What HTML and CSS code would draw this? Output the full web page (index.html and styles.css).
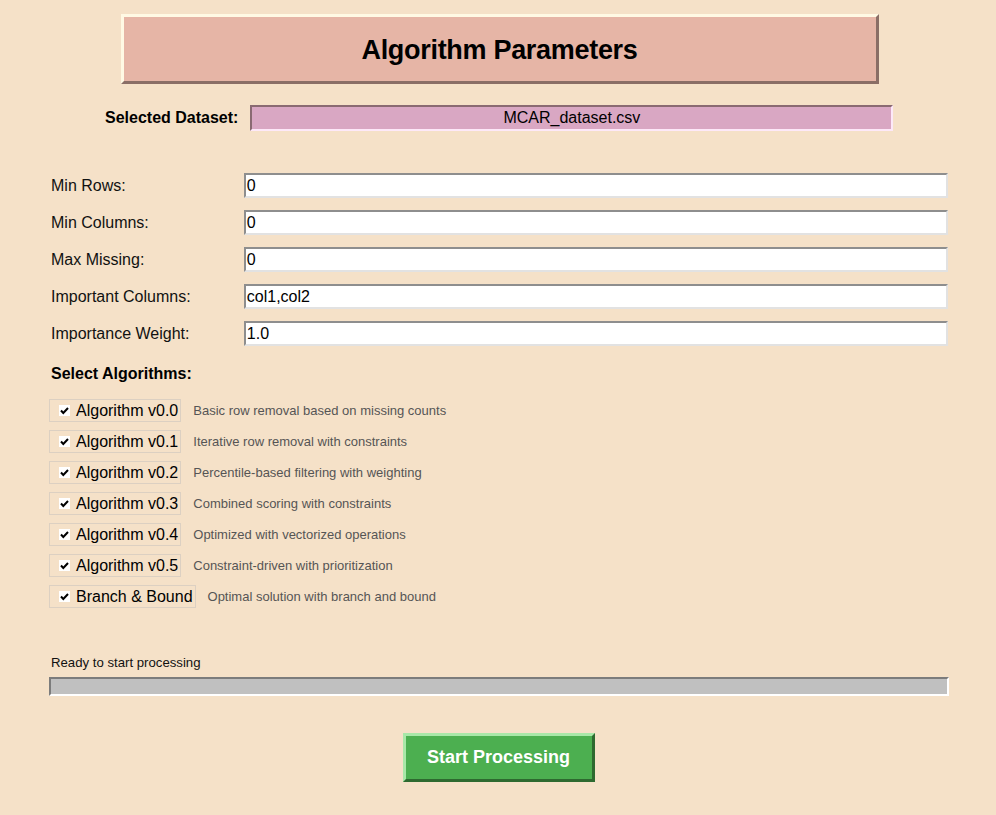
FILE: index.html
```html
<!DOCTYPE html>
<html>
<head>
<meta charset="utf-8">
<link rel="stylesheet" href="styles.css">
</head>
<body>
<div class="app">
  <div class="header"><h1>Algorithm Parameters</h1></div>

  <div class="dataset-row">
    <span class="dataset-label">Selected Dataset:</span>
    <div class="dataset-box">MCAR_dataset.csv</div>
  </div>

  <div class="form">
    <div class="form-row"><label>Min Rows:</label><div class="entry">0</div></div>
    <div class="form-row"><label>Min Columns:</label><div class="entry">0</div></div>
    <div class="form-row"><label>Max Missing:</label><div class="entry">0</div></div>
    <div class="form-row"><label>Important Columns:</label><div class="entry">col1,col2</div></div>
    <div class="form-row"><label>Importance Weight:</label><div class="entry">1.0</div></div>
  </div>

  <div class="section-title">Select Algorithms:</div>

  <div class="algos">
    <div class="algo"><div class="check"><span class="box"><svg width="11" height="11" viewBox="0 0 11 11"><path d="M2 5.5 L4.3 8 L9 3" fill="none" stroke="#000" stroke-width="2"/></svg></span>Algorithm v0.0</div><span class="desc">Basic row removal based on missing counts</span></div>
    <div class="algo"><div class="check"><span class="box"><svg width="11" height="11" viewBox="0 0 11 11"><path d="M2 5.5 L4.3 8 L9 3" fill="none" stroke="#000" stroke-width="2"/></svg></span>Algorithm v0.1</div><span class="desc">Iterative row removal with constraints</span></div>
    <div class="algo"><div class="check"><span class="box"><svg width="11" height="11" viewBox="0 0 11 11"><path d="M2 5.5 L4.3 8 L9 3" fill="none" stroke="#000" stroke-width="2"/></svg></span>Algorithm v0.2</div><span class="desc">Percentile-based filtering with weighting</span></div>
    <div class="algo"><div class="check"><span class="box"><svg width="11" height="11" viewBox="0 0 11 11"><path d="M2 5.5 L4.3 8 L9 3" fill="none" stroke="#000" stroke-width="2"/></svg></span>Algorithm v0.3</div><span class="desc">Combined scoring with constraints</span></div>
    <div class="algo"><div class="check"><span class="box"><svg width="11" height="11" viewBox="0 0 11 11"><path d="M2 5.5 L4.3 8 L9 3" fill="none" stroke="#000" stroke-width="2"/></svg></span>Algorithm v0.4</div><span class="desc">Optimized with vectorized operations</span></div>
    <div class="algo"><div class="check"><span class="box"><svg width="11" height="11" viewBox="0 0 11 11"><path d="M2 5.5 L4.3 8 L9 3" fill="none" stroke="#000" stroke-width="2"/></svg></span>Algorithm v0.5</div><span class="desc">Constraint-driven with prioritization</span></div>
    <div class="algo"><div class="check"><span class="box"><svg width="11" height="11" viewBox="0 0 11 11"><path d="M2 5.5 L4.3 8 L9 3" fill="none" stroke="#000" stroke-width="2"/></svg></span>Branch &amp; Bound</div><span class="desc">Optimal solution with branch and bound</span></div>
  </div>

  <div class="status">Ready to start processing</div>
  <div class="progress"></div>

  <div class="actions"><button class="start">Start Processing</button></div>
</div>
</body>
</html>
```

FILE: styles.css
```css
* { box-sizing: border-box; }
html, body { margin: 0; padding: 0; }
body {
  background: #f5e1c8;
  font-family: "Liberation Sans", Arial, sans-serif;
  color: #111;
  width: 996px;
  height: 815px;
  overflow: hidden;
}
.app {
  display: flex;
  flex-direction: column;
  padding: 14px 48px 0 49px;
}
.header {
  align-self: center;
  margin-left: 2px;
  width: 758px;
  height: 70px;
  padding-top: 3px;
  background: #e6b5a6;
  border: 3px solid;
  border-color: #fff9e4 #8a6e66 #8a6e66 #fff9e4;
  display: flex;
  align-items: center;
  justify-content: center;
}
.header h1 {
  margin: 0;
  font-size: 27px;
  font-weight: bold;
  color: #000;
  letter-spacing: -0.3px;
}
.dataset-row {
  display: flex;
  align-items: center;
  margin-top: 21px;
  padding-left: 56px;
  gap: 12px;
}
.dataset-label {
  font-weight: bold;
  font-size: 16px;
  color: #000;
}
.dataset-box {
  width: 643px;
  height: 26px;
  background: #d9a7c3;
  border: 2px solid;
  border-color: #8a6a72 #fde8f8 #fde8f8 #8a6a72;
  font-size: 16px;
  display: flex;
  align-items: center;
  justify-content: center;
  color: #000;
}
.form {
  display: flex;
  flex-direction: column;
  gap: 12px;
  margin-top: 42px;
}
.form-row {
  display: flex;
  align-items: center;
  padding-left: 2px;
}
.form-row label {
  width: 193px;
  font-size: 16px;
  color: #111;
}
.entry {
  width: 705px;
  height: 25px;
  background: #fff;
  border: 2px solid;
  border-color: #8e8e8e #e2e2e2 #e2e2e2 #8e8e8e;
  font-size: 16px;
  line-height: 21px;
  padding-left: 1px;
  color: #000;
}
.section-title {
  margin-top: 19px;
  padding-left: 2px;
  font-weight: bold;
  font-size: 16px;
  color: #000;
}
.algos {
  display: flex;
  flex-direction: column;
  gap: 8px;
  margin-top: 16px;
}
.algo {
  display: flex;
  align-items: center;
  gap: 12px;
}
.check {
  display: flex;
  align-items: center;
  height: 23px;
  border: 1px solid #dcd0c2;
  padding: 0 2px 0 9px;
  font-size: 16px;
  color: #000;
}
.box {
  display: inline-flex;
  flex: none;
  width: 11px;
  height: 11px;
  margin-right: 6px;
  background: #fff;
}
.box svg { display: block; }
.desc {
  font-size: 13px;
  color: #555;
}
.status {
  margin-top: 47px;
  padding-left: 2px;
  font-size: 13.2px;
  color: #111;
}
.progress {
  margin-top: 7px;
  width: 900px;
  height: 19px;
  background: #c0c0c0;
  border: 2px solid;
  border-color: #7c7c7c #ffffff #ffffff #7c7c7c;
}
.actions {
  display: flex;
  justify-content: center;
  margin-top: 37px;
}
.start {
  width: 192px;
  height: 49px;
  margin-left: 0;
  background: #4caf50;
  border: 3px solid;
  border-color: #a8e8a8 #2e6a30 #2e6a30 #a8e8a8;
  color: #fff;
  font-family: "Liberation Sans", Arial, sans-serif;
  font-weight: bold;
  font-size: 18px;
  padding: 0;
}
```
